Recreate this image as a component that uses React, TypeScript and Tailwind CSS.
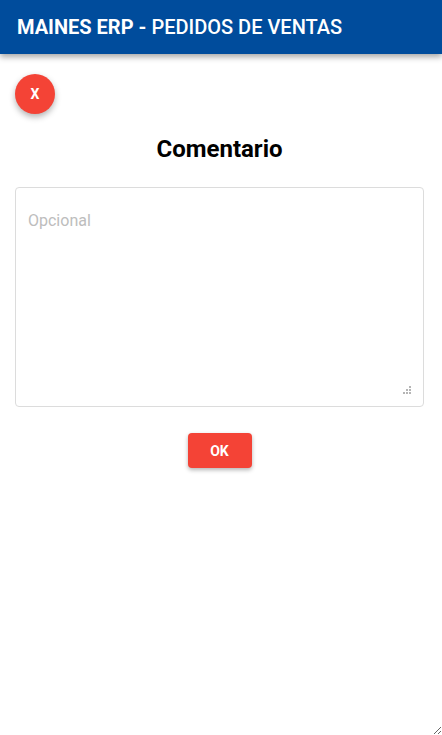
import { useState } from "react";

// grip de redimensionar: pontinhos em escada, como o do navegador da captura
function Grip() {
  const dots = [
    [6, 0],
    [3, 3],
    [6, 3],
    [0, 6],
    [3, 6],
    [6, 6],
  ];
  return (
    <svg
      width="8"
      height="8"
      viewBox="0 0 8 8"
      className="pointer-events-none absolute right-[13px] bottom-[13px]"
    >
      {dots.map(([x, y], i) => (
        <rect key={i} x={x} y={y} width="2" height="2" fill="#b5b5b5" />
      ))}
    </svg>
  );
}

export default function App() {
  const [comentario, setComentario] = useState("");

  return (
    <div className="h-[735px] w-full resize overflow-auto bg-white font-['Roboto',sans-serif]">
      <header className="flex h-[54px] items-center bg-[#004c9c] px-[17px] shadow-[0_3px_6px_rgba(0,0,0,0.35)]">
        <h1 className="text-[20px] font-medium text-white">
          <span className="font-bold">MAINES ERP -</span> PEDIDOS DE VENTAS
        </h1>
      </header>

      <div className="pt-5 pr-[18px] pl-[15px]">
        <button
          type="button"
          aria-label="Cerrar"
          className="flex size-10 items-center justify-center rounded-full bg-[#f44336] text-sm font-bold text-white shadow-[0_3px_6px_rgba(0,0,0,0.3)]"
        >
          X
        </button>

        <h2 className="mt-[19px] text-center text-2xl leading-8 font-bold text-black">
          Comentario
        </h2>

        <div className="relative mt-[22px]">
          <textarea
            value={comentario}
            onChange={(e) => setComentario(e.target.value)}
            placeholder="Opcional"
            className="block h-[220px] w-full resize-none rounded border border-[#dcdcdc] px-3 pt-[21px] pb-5 text-base text-gray-800 outline-none placeholder:text-[#bdbdbd]"
          />
          <Grip />
        </div>

        <div className="mt-[26px] flex justify-center">
          <button
            type="button"
            className="h-[35px] w-16 rounded bg-[#f44336] text-sm font-bold text-white shadow-[0_2px_4px_rgba(0,0,0,0.3)]"
          >
            OK
          </button>
        </div>
      </div>
    </div>
  );
}
